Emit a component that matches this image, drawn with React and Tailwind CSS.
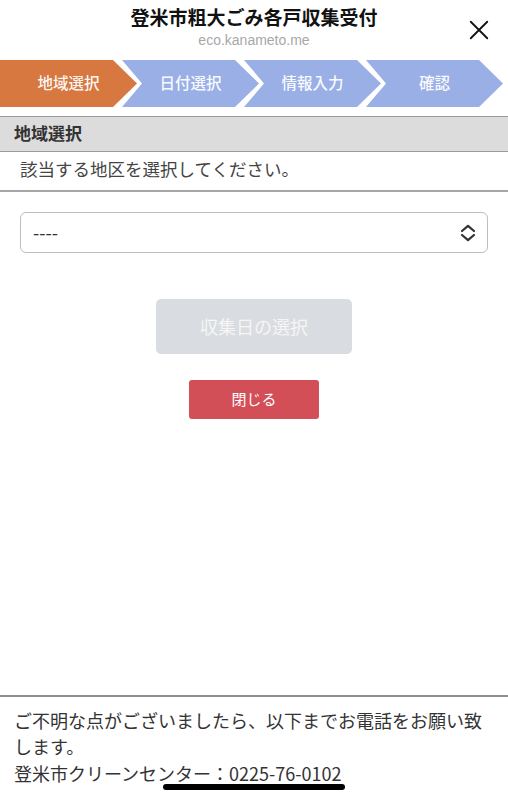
import { useState } from "react";

const steps = ["地域選択", "日付選択", "情報入力", "確認"];

// Chevron-shaped step in the progress bar
function Step({ label, index, active }) {
  const shape =
    index === 0
      ? "[clip-path:polygon(0_0,calc(100%-24px)_0,100%_50%,calc(100%-24px)_100%,0_100%)]"
      : "[clip-path:polygon(0_0,calc(100%-24px)_0,100%_50%,calc(100%-24px)_100%,0_100%,20px_50%)]";
  return (
    <div
      className={`${shape} ${index === 0 ? "" : "-ml-[15px]"} ${
        active ? "bg-[#d6783f]" : "bg-[#9aafe6]"
      } w-[137px] h-[47px] shrink-0 flex items-center justify-center pb-[2px] text-[15.5px] font-medium text-white/95`}
    >
      {label}
    </div>
  );
}

export default function App() {
  const [area, setArea] = useState("");

  return (
    <div className="relative min-h-[800px] bg-white flex flex-col text-[#333] font-['Noto_Sans_CJK_JP','Noto_Sans',sans-serif]">
      {/* header */}
      <header className="relative pt-[4px] text-center">
        <h1 className="text-[19px] font-bold leading-[26px] text-[#111]">
          登米市粗大ごみ各戸収集受付
        </h1>
        <p className="text-[14px] leading-[18px] mt-[1px] text-[#a8a8a8] font-['Liberation_Sans',sans-serif]">
          eco.kanameto.me
        </p>
        <button className="absolute right-[18px] top-[19px] w-[22px] h-[22px] flex items-center justify-center text-[#111]">
          <svg viewBox="0 0 24 24" width="22" height="22" fill="none" stroke="currentColor" strokeWidth="2" strokeLinecap="round">
            <path d="M3 3L21 21M21 3L3 21" />
          </svg>
        </button>
      </header>

      {/* progress */}
      <div className="flex mt-[11px]">
        {steps.map((s, i) => (
          <Step key={s} label={s} index={i} active={i === 0} />
        ))}
      </div>

      {/* section */}
      <div className="mt-[9px] bg-[#dcdcdc] border-t border-b border-[#9a9a9a] h-[36px] flex items-center px-[14px] pb-[2px]">
        <h2 className="text-[17px] font-bold text-[#333]">地域選択</h2>
      </div>
      <p className="px-[20px] h-[40px] flex items-center pb-[4px] text-[17.5px] text-[#444] border-b-2 border-[#a6a6a6]">
        該当する地区を選択してください。
      </p>

      <div className="px-[20px] mt-[20px]">
        <div className="relative">
          <select
            value={area}
            onChange={(e) => setArea(e.target.value)}
            className="appearance-none w-full h-[41px] rounded-[6px] border border-[#bdbdbd] bg-white pl-[12px] text-[18px] text-[#333] outline-none"
          >
            <option value="">----</option>
          </select>
          <svg
            className="absolute right-[11px] top-1/2 -translate-y-1/2 pointer-events-none"
            viewBox="0 0 18 18"
            width="18"
            height="18"
            fill="none"
            stroke="#333"
            strokeWidth="2.2"
            strokeLinecap="round"
            strokeLinejoin="round"
          >
            <path d="M3 7L9 1.8L15 7M3 11L9 16.2L15 11" />
          </svg>
        </div>
      </div>

      <div className="flex flex-col items-center">
        <button
          disabled
          className="mt-[46px] w-[196px] h-[55px] rounded-[5px] bg-[#d9dce1] text-[18px] text-[#f6f6f6]"
        >
          収集日の選択
        </button>
        <button className="mt-[26px] w-[130px] h-[39px] rounded-[3px] bg-[#d24f58] text-[15px] text-white">
          閉じる
        </button>
      </div>

      <div className="flex-1" />

      {/* footer */}
      <footer className="border-t-2 border-[#8e8e8e] px-[14px] pt-[10px] pb-[14px] text-[18px] leading-[26.5px] text-[#333]">
        <p>ご不明な点がございましたら、以下までお電話をお願い致します。</p>
        <p>
          登米市クリーンセンター：
          <a href="#" className="underline underline-offset-[3px]">
            0225-76-0102
          </a>
        </p>
      </footer>

      {/* home indicator */}
      <div className="absolute left-1/2 -translate-x-1/2 bottom-[10px] w-[182px] h-[6px] rounded-full bg-black" />
    </div>
  );
}
